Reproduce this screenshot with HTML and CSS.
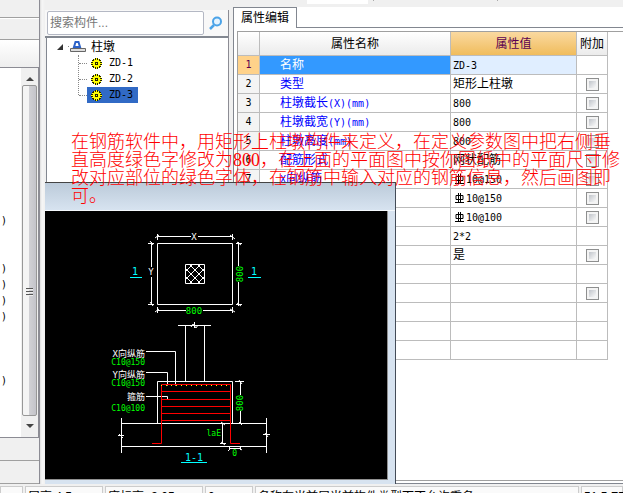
FILE: index.html
```html
<!DOCTYPE html>
<html lang="zh-CN">
<head>
<meta charset="utf-8">
<title>属性编辑</title>
<link rel="stylesheet" href="styles.css">
</head>
<body>
<svg class="defs" aria-hidden="true">
  <symbol id="gear" viewBox="0 0 11 11">
    <path d="M4 0h3v1h2v1h1v2h1v3h-1v2H9v1H7v1H4v-1H2V9H1V7H0V4h1V2h1V1h2z" fill="#222200"/>
    <path d="M3 1h1v1h1V0h1v2h1V1h1v2h2v1H9v1h2v1H9v1h1v1H8v2H7V9H6v2H5V9H4v1H3V8H1V7h1V6H0V5h2V4H1V3h2z" fill="#ffff00"/>
    <path d="M4 4h3v3H4z" fill="#222200"/>
    <path d="M5 5h1v1H5z" fill="#ffff00"/>
  </symbol>
  <symbol id="rebar" viewBox="0 0 9 10">
    <path d="M3.500 0v9M5.500 0v9M1 2.500h7v4H1zM0 9.500h9" fill="none" stroke="#000"/>
  </symbol>
</svg>
<div class="workspace">
  <section class="side">
    <div class="side-top"></div>
    <div class="side-head"></div>
    <div class="side-bar"></div>
    <div class="side-list">
      <ul class="brackets">
        <li></li><li></li><li></li><li></li><li></li><li></li><li></li><li></li><li></li>
        <li>)</li><li></li><li></li><li>)</li><li>)</li><li>)</li><li>)</li><li></li><li></li><li></li><li>)</li>
      </ul>
      <div class="scrollbar">
        <svg class="arrow" viewBox="0 0 9 5"><path d="M1 5l4-4 4 4z" fill="#444"/></svg>
        <div class="thumb"><svg class="grip" viewBox="0 0 7 9"><path d="M0 .5h7M0 3.500h7M0 6.500h7" stroke="#555"/><path d="M0 1.500h7M0 4.500h7M0 7.500h7" stroke="#eee"/></svg></div>
        <svg class="arrow" viewBox="0 0 9 5"><path d="M1 0h8L5 4z" fill="#444"/></svg>
      </div>
    </div>
    <div class="side-foot"></div>
    <div class="side-foot"></div>
  </section>
  <div class="splitter"></div>
  <div class="content">
    <div class="toolbar"><span class="field"></span><span class="rule"></span><span class="rule far"></span></div>
    <div class="panes">
      <section class="tree-pane">
        <div class="search">
          <input type="text" placeholder="搜索构件..." aria-label="搜索构件">
          <button type="button" aria-label="搜索">
            <svg viewBox="0 0 14 14"><circle cx="8" cy="5.500" r="4" fill="#e4f3ff" stroke="#4ba3e8" stroke-width="2"/><path d="M5 9l-4 4" stroke="#4ba3e8" stroke-width="2.500"/></svg>
          </button>
        </div>
        <div class="tree">
          <div class="root">
            <svg class="twisty" viewBox="0 0 7 7"><path d="M6 0v6H0z" fill="#333"/></svg>
            <svg class="pier" viewBox="0 0 18 12"><path d="M0 5.500h2" stroke="#888" stroke-dasharray="1 1"/><path d="M6 6l1.500-5h3L12 6z" fill="#fff" stroke="#2c62c8" stroke-width="2"/><path d="M2.500 7.500h15v3h-15z" fill="#ddd" stroke="#666"/></svg>
            <span>柱墩</span>
          </div>
          <ul class="leaves">
            <li><span class="leaf"><svg><use href="#gear"/></svg>ZD-1</span></li>
            <li><span class="leaf"><svg><use href="#gear"/></svg>ZD-2</span></li>
            <li><span class="leaf selected"><svg><use href="#gear"/></svg>ZD-3</span></li>
          </ul>
        </div>
      </section>
      <section class="props">
        <div class="tabs"><button type="button" class="tab">属性编辑</button></div>
        <div class="sheet">
          <table>
            <colgroup><col class="c-no"><col class="c-name"><col class="c-value"><col class="c-extra"></colgroup>
            <thead><tr><th></th><th>属性名称</th><th class="active">属性值</th><th>附加</th></tr></thead>
            <tbody>
              <tr class="current"><th>1</th><td>名称</td><td><i>ZD-3</i></td><td></td></tr>
              <tr><th>2</th><td>类型</td><td>矩形上柱墩</td><td><input type="checkbox" aria-label="附加 2"></td></tr>
              <tr><th>3</th><td>柱墩截长<i>(X)(mm)</i></td><td><i>800</i></td><td><input type="checkbox" aria-label="附加 3"></td></tr>
              <tr><th>4</th><td>柱墩截宽<i>(Y)(mm)</i></td><td><i>800</i></td><td><input type="checkbox" aria-label="附加 4"></td></tr>
              <tr><th>5</th><td>柱墩高度<i>(mm)</i></td><td><i>800</i></td><td><input type="checkbox" aria-label="附加 5"></td></tr>
              <tr><th>6</th><td>配筋形式</td><td>网状配筋</td><td><input type="checkbox" aria-label="附加 6"></td></tr>
              <tr><th>7</th><td><i>X</i>向纵筋</td><td><svg class="rebar"><use href="#rebar"/></svg><i>10@150</i></td><td><input type="checkbox" aria-label="附加 7"></td></tr>
              <tr><th></th><td></td><td><svg class="rebar"><use href="#rebar"/></svg><i>10@150</i></td><td><input type="checkbox" aria-label="附加 8"></td></tr>
              <tr><th></th><td></td><td><svg class="rebar"><use href="#rebar"/></svg><i>10@100</i></td><td><input type="checkbox" aria-label="附加 9"></td></tr>
              <tr><th></th><td></td><td><i>2*2</i></td><td></td></tr>
              <tr><th></th><td></td><td>是</td><td><input type="checkbox" aria-label="附加 11"></td></tr>
              <tr><th></th><td></td><td></td><td></td></tr>
              <tr><th></th><td></td><td></td><td><input type="checkbox" aria-label="附加 13"></td></tr>
              <tr><th></th><td></td><td></td><td></td></tr>
              <tr><th></th><td></td><td></td><td></td></tr>
              <tr><th></th><td></td><td></td><td></td></tr>
            </tbody>
          </table>
        </div>
      </section>
    </div>
  </div>
  <div class="dialog">
    <div class="dialog-title"></div>
    <svg class="drawing" viewBox="45 211 342 268">
      <g fill="none" stroke="#fff">
        <path d="M157.500 243.500h75v61h-75z"/>
        <path d="M157 236.500h34M198 236.500h35M157.500 234v6M232.500 234v6M155 238l4-3M230 235l5 4"/>
        <path d="M151.500 242v25M151.500 277v28M148 243.500h6M148 304.500h6M150 241l3 4M150 302l3 4"/>
        <path d="M238.500 242v24M238.500 282v24M236 243.500h6M236 304.500h6M237 242l4 3M237 303l4 3"/>
        <path d="M157 310.500h29M203 310.500h30M157.500 307v6M232.500 307v6M155 312l4-3M230 309l5 3"/>
        <path d="M185.500 264.500h19v19h-19z"/>
        <path d="M185 272l8-8M185 280l16-16M189 284l16-16M197 284l8-8M185 276l8 8M185 268l16 16M189 264l16 16M197 264l8 8"/>
        <path d="M178 325.500h33M185.500 325v56M204.500 325v56M194.500 322v6M191 327l2-3 3 4 2-3"/>
        <path d="M157.500 423.500v-42h75v42M121 423.500h36M157 423.500h110M121 446.500h146M121.500 418v35M266.500 418v35"/>
        <path d="M118 435.500h6M119 434l4 4M263 434.500h7M265 433l3 4"/>
        <path d="M146 351.500h29.500v34M146 372.500h21.500v13M146 396.500h21.500v3"/>
        <path d="M240.500 381v14M240.500 411v12M235 381.500h9M239 380l3 4M239 422l3 3"/>
        <path d="M222.500 423v21M220 443.500h6M221 422l4 3M221 442l4 3"/>
        <path d="M229 448.500h12M229.500 446v4M240.500 446v4M228 451l3-3M239 448l3 2"/>
      </g>
      <g fill="none" stroke="#f00">
        <path d="M152 443.500h9.500v-59h69v59h9.500M161 391.500h70M161 399.500h70M161 406.500h70M161 413.500h70M161 420.500h70"/>
      </g>
      <path d="M161 385.500h69" stroke="#ff0" stroke-dasharray="1 4"/>
      <path d="M130 277.500h12M248 277.500h13M181 462.500h26" stroke="#0ff"/>
      <g class="cyan">
        <text x="135" y="275">1</text><text x="254" y="275">1</text><text x="194" y="461">1-1</text>
      </g>
      <g class="white">
        <text class="mid" x="194" y="240">X</text><text class="mid" x="151" y="275">Y</text>
        <text x="145" y="357">X向纵筋</text><text x="145" y="378">Y向纵筋</text><text x="145" y="400">箍筋</text>
      </g>
      <g class="green">
        <text x="145" y="365">C10@150</text><text x="145" y="386">C10@150</text><text x="145" y="411">C10@100</text>
        <text x="221" y="436">laE</text><text x="237" y="456">0</text>
        <text class="dim" x="194" y="314">800</text>
        <text class="dim" transform="translate(243 274) rotate(-90)">800</text>
        <text class="dim" transform="translate(243 403) rotate(-90)">800</text>
      </g>
    </svg>
  </div>
  <p class="note">在钢筋软件中，用矩形上柱墩构件来定义，在定义参数图中把右侧垂<br>直高度绿色字修改为800，在上面的平面图中按你图纸中的平面尺寸修<br>改对应部位的绿色字体，在钢筋中输入对应的钢筋信息，然后画图即<br>可。</p>
</div>
<footer class="status">
  <span class="s-edge"></span><span class="s-height">层高:4.5</span><span class="s-base">底标高:-3.05</span><span class="s-count">0</span><span class="s-message">名称在当前层当前构件类型下不允许重名</span><span class="s-fps">51.5 FPS</span>
</footer>
</body>
</html>
```
FILE: styles.css
```css
* { box-sizing: border-box; }

body {
  margin: 0;
  height: 100vh;
  overflow: hidden;
  display: flex;
  flex-direction: column;
  background: #f0f0f0;
  color: #000;
  font: 12px/16px "Liberation Sans", "Noto Sans CJK SC", sans-serif;
}

ul, p { margin: 0; padding: 0; list-style: none; }
i, .leaf, .brackets { font-family: "DejaVu Sans Mono", monospace; font-size: 10px; font-style: normal; }
svg { display: block; flex: none; }
.defs { position: absolute; width: 0; height: 0; }

.workspace { position: relative; flex: 1; min-height: 0; display: flex; }

/* left column */
.side { width: 40px; display: flex; flex-direction: column; border-right: 1px solid #8c8c94; }
.side-top { height: 18px; border-bottom: 1px solid #a0a0a0; }
.side-head { height: 22px; border-top: 1px solid #fff; border-bottom: 1px solid #a0a0a0; }
.side-bar { height: 28px; background: linear-gradient(#fff, #eee); border-bottom: 1px solid #8c8c94; }
.side-list { flex: 1; min-height: 0; display: flex; justify-content: space-between; background: #fff; border-right: 1px solid #8c8c94; border-bottom: 1px solid #8c8c94; }
.side-foot { height: 23px; border-bottom: 1px solid #a0a0a0; }
.brackets { padding: 1px 0 0 1px; }
.brackets li { height: 16px; }
.scrollbar { width: 17px; display: flex; flex-direction: column; align-items: center; justify-content: space-between; padding: 8px 0; background: #f0f0f0; }
.arrow { width: 9px; height: 5px; }
.thumb { width: 15px; flex: 1; margin: 4px 0 8px; display: flex; align-items: center; justify-content: center; padding-top: 84px; border: 1px solid #979797; border-radius: 2px; background: linear-gradient(90deg, #f4f4f4 45%, #d0d0d4 50%, #c4c4ca); }
.grip { width: 7px; height: 9px; }
.splitter { width: 5px; background: linear-gradient(90deg, #ddd, #f6f6f6 40%, #f0f0f0); }

/* main area */
.content { flex: 1; min-width: 0; display: flex; flex-direction: column; }
.toolbar { height: 7px; display: flex; align-items: flex-start; padding-left: 262px; gap: 5px; }
.field { width: 61px; height: 4px; background: #fff; }
.rule { width: 1px; height: 1px; background: #aaa; }
.far { margin-left: 118px; }
.panes { flex: 1; min-height: 0; display: flex; gap: 4px; }

.tree-pane { width: 184px; margin-top: 3px; display: flex; flex-direction: column; border-right: 1px solid #8c8c94; }
.search { height: 28px; display: flex; align-items: center; gap: 3px; padding-left: 2px; background: #f8f8f8; border-bottom: 2px solid #828790; }
.search input { width: 157px; height: 24px; padding: 0 2px; border: 1px solid #b4b8c4; border-radius: 2px; background: #fff; font: inherit; }
.search input::placeholder { color: #777; opacity: 1; }
.search button { width: 18px; height: 18px; padding: 2px; border: 0; background: none; }
.search button svg { width: 14px; height: 14px; }
.tree { flex: 1; margin-left: 1px; padding: 1px 0 0 10px; background: #fff; border-left: 1px solid #828790; }
.root { display: flex; align-items: center; height: 16px; gap: 4px; }
.twisty { width: 7px; height: 7px; }
.pier { width: 18px; height: 12px; }
.root span { margin-left: 1px; }
.leaves { margin-left: 21px; border-left: 1px dotted #888; height: 40px; }
.leaves li { display: flex; align-items: center; height: 16px; }
.leaves li::before { content: ""; width: 8px; border-top: 1px dotted #888; }
.leaf { display: flex; align-items: center; height: 16px; gap: 7px; padding: 0 5px 0 4px; }
.leaf svg { width: 11px; height: 11px; }
.selected { background: #316ac5; }

/* property editor */
.props { flex: 1; min-width: 0; display: flex; flex-direction: column; background: #fff; border-left: 1px solid #828790; border-bottom: 1px solid #828790; }
.tabs { height: 21px; display: flex; }
.tabs::after { content: ""; flex: 1; border-bottom: 1px solid #828790; }
.tab { width: 63px; padding: 0; border: 0; border-top: 1px solid #828790; border-right: 1px solid #828790; background: #fff; font: inherit; }
.sheet { flex: 1; min-height: 0; margin: 3px 0 2px 3px; border: 1px solid #a0a0a0; border-right: 0; }
table { table-layout: fixed; width: 370px; border-collapse: separate; border-spacing: 0; }
.c-no { width: 22px; }
.c-name { width: 191px; }
.c-value { width: 126px; }
.c-extra { width: 31px; }
th, td { height: 19px; padding: 0 0 0 2px; border-right: 1px solid #bcbcbc; border-bottom: 1px solid #bcbcbc; font-weight: normal; text-align: left; line-height: 16px; white-space: nowrap; }
thead th { height: 24px; padding: 0; text-align: center; background: linear-gradient(#fff, #ebebeb); }
thead .active { color: #5a0050; background: linear-gradient(#fad9a0, #f0bc5c); }
tbody th { padding: 0; text-align: center; background: #f4f4f4; font: 10px/16px "DejaVu Sans Mono", monospace; }
td:nth-child(2) { padding-left: 20px; color: #00f; }
td:last-child { padding: 0; }
.current th { color: #5a0050; background: #ffd28a; }
.current td:nth-child(2) { color: #fff; background: #3399ff; }
.current td:nth-child(3) { background: #e0eeff; }
td input { display: block; width: 13px; height: 13px; margin: 0 auto; appearance: none; border: 1px solid #8e8f8f; background: linear-gradient(135deg, #c0c4ca, #fafafa) content-box, #f4f4f4; padding: 2px; }
.rebar { display: inline-block; width: 9px; height: 10px; margin: 0 2px; vertical-align: -1px; }

/* section drawing window laid over the panes */
.dialog { position: absolute; left: 45px; top: 182px; bottom: 0; width: 351px; display: flex; flex-direction: column; background: #d7e3f0; border-top: 1px solid #444; border-right: 1px solid #444c58; }
.dialog-title { height: 28px; background: linear-gradient(#bccbda, #d7e3f0); border-bottom: 1px solid #f4f8fc; }
.drawing { width: 343px; height: 269px; background: #000; border-right: 1px solid #909090; border-bottom: 1px solid #909090; }
.drawing text { font: 8px "DejaVu Sans Mono", "Noto Sans CJK SC", monospace; text-anchor: end; }
.drawing .cyan text { font-size: 10px; fill: #0ff; text-anchor: middle; }
.drawing .white text { font-size: 9px; fill: #fff; }
.drawing .green text { fill: #0f0; }
.drawing .green .dim { font-size: 9px; text-anchor: middle; }
.drawing .white .mid { text-anchor: middle; }

.note { position: absolute; left: 71px; top: 133px; color: #f00; font: 18px/18px "Liberation Serif", "Noto Sans CJK SC", serif; font-weight: 300; white-space: nowrap; }

/* status bar */
.status { height: 9px; display: flex; gap: 2px; padding-top: 2px; overflow: hidden; }
.status span { height: 24px; padding: 2px; border: 1px solid #ccc; background: #fafafa; white-space: nowrap; }
.s-edge { width: 23px; border-left: 0; }
.s-height { width: 78px; }
.s-base { width: 98px; }
.s-count { width: 48px; }
.s-message { flex: 1; }
.s-fps { width: 42px; }
```
